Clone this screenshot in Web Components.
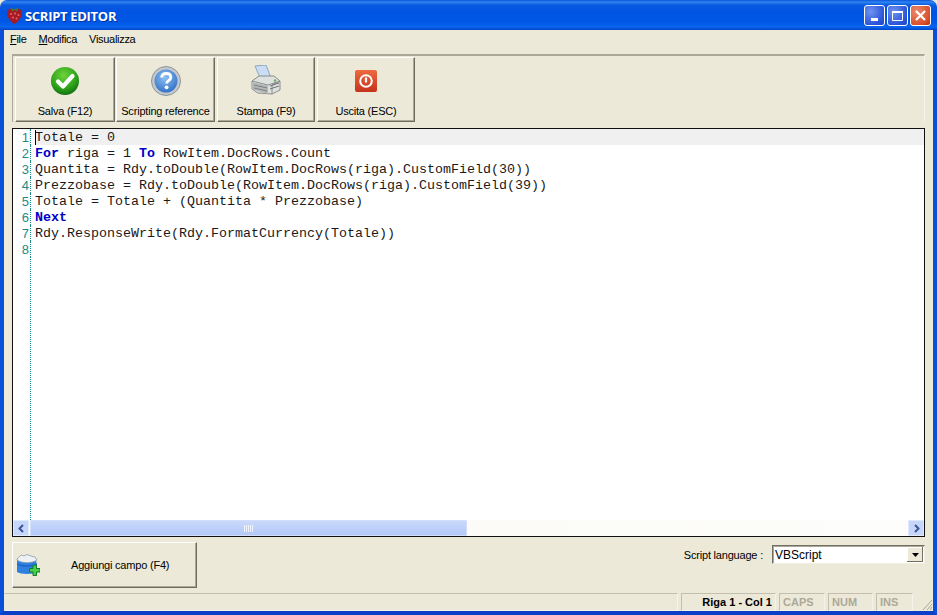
<!DOCTYPE html>
<html><head><meta charset="utf-8"><style>
html,body{margin:0;padding:0;width:937px;height:615px;overflow:hidden;background:#ece9d8}
</style></head><body>
<xp-window title="SCRIPT EDITOR">
  <xp-menubar><span><u>F</u>ile</span><span><u>M</u>odifica</span><span>Visualizza</span></xp-menubar>
  <xp-toolbar>
    <tool-button w="100" label="Salva (F12)" icon="save"></tool-button>
    <tool-button w="99" label="Scripting reference" icon="help"></tool-button>
    <tool-button w="98" label="Stampa (F9)" icon="print"></tool-button>
    <tool-button w="98" label="Uscita (ESC)" icon="exit"></tool-button>
  </xp-toolbar>
  <code-editor></code-editor>
  <bottom-panel></bottom-panel>
  <xp-statusbar></xp-statusbar>
</xp-window>
<script>
const UI='"Liberation Sans",Arial,sans-serif';
function def(name,html){customElements.define(name,class extends HTMLElement{constructor(){super();this.attachShadow({mode:'open'})}connectedCallback(){this.shadowRoot.innerHTML=typeof html==='function'?html(this):html;}})}
const ICONS={
save:`<svg width="30" height="30" viewBox="0 0 30 30"><defs><radialGradient id="g" cx="45%" cy="30%" r="75%"><stop offset="0" stop-color="#6fd23c"/><stop offset=".6" stop-color="#2fa51a"/><stop offset="1" stop-color="#0c6a10"/></radialGradient></defs><circle cx="15" cy="15" r="14" fill="url(#g)"/><path d="M8 15.500l5 5L22.500 10" fill="none" stroke="#fff" stroke-width="4.200" stroke-linecap="round" stroke-linejoin="round"/></svg>`,
help:`<svg width="32" height="32" viewBox="0 0 32 32"><defs><radialGradient id="h" cx="45%" cy="35%" r="70%"><stop offset="0" stop-color="#8fc0f2"/><stop offset="1" stop-color="#2e6fc4"/></radialGradient></defs><circle cx="16" cy="16" r="14.500" fill="#c4c8cc" stroke="#8f959b"/><circle cx="16" cy="16" r="11.500" fill="url(#h)"/><path d="M11.500 12.500c.5-3 2.500-4 4.700-4 2.700 0 4.600 1.500 4.600 3.800 0 3.300-4.200 3.300-4.200 6.200" fill="none" stroke="#fff" stroke-width="2.800"/><circle cx="16.600" cy="22.300" r="1.900" fill="#fff"/></svg>`,
print:`<svg width="32" height="32" viewBox="0 0 32 32"><path d="M5 1l11-1 5 13-10 2z" fill="#c9def5" stroke="#8ea6bc"/><path d="M2 16l7-5h15l6 5v9l-8 4-14-1-6-4z" fill="#dfe1df" stroke="#888c8c"/><path d="M2 16l16 4 12-4-8 4v9" fill="none" stroke="#8a8e8e"/><path d="M2 17l16 3.500V29L2 24z" fill="#b4b7b7"/><path d="M20 21l9-3M20 24l9-3" stroke="#6d7272"/><path d="M4 20l13 3M4 23l13 3" stroke="#7c8080"/><circle cx="25" cy="15.500" r="1.200" fill="#62b05a"/></svg>`,
exit:`<svg width="22" height="22" viewBox="0 0 22 22"><defs><linearGradient id="e" x1="0" y1="0" x2="0" y2="1"><stop offset="0" stop-color="#ee6a3f"/><stop offset="1" stop-color="#c4321c"/></linearGradient></defs><rect width="22" height="22" rx="2" fill="url(#e)"/><circle cx="11" cy="11" r="5.800" fill="none" stroke="#fff" stroke-width="2"/><path d="M11 7.500v5" stroke="#fff" stroke-width="2.200"/></svg>`};
def('xp-window',h=>`<style>
:host{display:flex;flex-direction:column;width:937px;height:615px;box-sizing:border-box;font:11px ${UI};color:#000;background:#ece9d8}
.title{height:30px;flex:none;display:flex;align-items:center;gap:3px;padding:0 6px 0 7px;box-sizing:border-box;background:linear-gradient(#0a53d8 0,#2f86f2 2px,#0a5ae0 5px,#0054e3 12px,#0057e6 22px,#0a66ee 27px,#0043c4 30px);border-radius:7px 7px 0 0;color:#fff}
.t{font:bold 13px "Open Sans","Liberation Sans",sans-serif;letter-spacing:-.3px;text-shadow:1px 1px #0a2f9e;flex:1;padding-top:1px}
.b{display:flex;gap:2px;margin-top:1px}
.btn{width:21px;height:21px;border:1px solid #fff;border-radius:3px;box-sizing:border-box;background:radial-gradient(circle at 30% 30%,#6f92f0,#2a55d8 70%,#2345c0);display:flex;align-items:center;justify-content:center}
.btn.x{background:radial-gradient(circle at 30% 30%,#ea8a6e,#d9502c 70%,#b8320f)}
.body{flex:1;min-height:0;display:flex;flex-direction:column;background:#ece9d8;border-left:4px solid #0a4fd8;border-right:4px solid #0a4fd8;border-bottom:4px solid #0a3fc8}
</style><div class="title"><svg width="15" height="18" viewBox="0 0 15 18"><path d="M7.500 3.500C11 2 15 3 15 7.500c0 4-4 8.500-7.500 10.500C4 16 0 11.500 0 7.500 0 3 4 2 7.500 3.500z" fill="#a81a24"/><path d="M3.500 1.500l4 2 4-2-1.500 4-2.500-1.500L5 5.500z" fill="#3f7d38"/><g fill="#e8696f"><circle cx="4" cy="8" r="1"/><circle cx="8" cy="7.500" r="1"/><circle cx="11.500" cy="9" r="1"/><circle cx="6" cy="11.500" r="1"/><circle cx="9.500" cy="12.500" r="1"/></g></svg><span class="t">${h.getAttribute('title')}</span>
<div class="b"><div class="btn"><svg width="13" height="13"><rect x="3" y="9" width="7" height="3" fill="#fff"/></svg></div><div class="btn"><svg width="13" height="13"><path d="M1.500 2.500h10v9h-10z" fill="none" stroke="#fff"/><rect x="1" y="2" width="11" height="2" fill="#fff"/></svg></div><div class="btn x"><svg width="13" height="13"><path d="M2 2l9 9M11 2l-9 9" stroke="#fff" stroke-width="2.200"/></svg></div></div></div>
<div class="body"><slot></slot></div>`);
def('xp-menubar',`<style>:host{display:flex;height:20px;flex:none;align-items:center;gap:12px;padding:0 6px 2px;box-sizing:border-box}
::slotted(span){font:11px ${UI};letter-spacing:-.3px}</style><slot></slot>`);
def('xp-toolbar',`<style>:host{display:flex;flex:none;gap:1px;margin:4px 8px 0 8px;height:68px;padding:1px 0 0 2px;box-sizing:border-box;border-top:2px solid #aca899;border-left:1px solid #aca899;border-right:1px solid #f5f3ea}</style><slot></slot>`);
def('tool-button',h=>`<style>:host{display:block;width:${h.getAttribute('w')}px;height:65px;margin-right:${h.getAttribute('w')=='100'?0:1}px}
.w{box-sizing:border-box;height:100%;display:flex;flex-direction:column;align-items:center;border:1px solid;border-color:#fff #6f6c5e #6f6c5e #fff;box-shadow:inset -1px -1px #aca899;font:11px ${UI};letter-spacing:-.2px}
.i{height:47px;display:flex;align-items:center;justify-content:center;flex:none;padding-bottom:1px;box-sizing:border-box}
.l{white-space:nowrap}</style><div class="w"><div class="i">${ICONS[h.getAttribute('icon')]}</div><div class="l">${h.getAttribute('label')}</div></div>`);
const esc=s=>s.replace(/\b(For|To|Next)\b/g,'<b>$1</b>');
const lines=['Totale = 0','For riga = 1 To RowItem.DocRows.Count','Quantita = Rdy.toDouble(RowItem.DocRows(riga).CustomField(30))','Prezzobase = Rdy.toDouble(RowItem.DocRows(riga).CustomField(39))','Totale = Totale + (Quantita * Prezzobase)','Next','Rdy.ResponseWrite(Rdy.FormatCurrency(Totale))',''];
def('code-editor',`<style>:host{display:flex;flex-direction:column;flex:none;height:409px;margin:6px 8px 0 8px;border:1px solid #111;background:#fff;box-sizing:border-box}
.c{flex:1;min-height:0;display:flex;flex-direction:column;position:relative;font:13.33px/18px "Liberation Mono",monospace;color:#1a1a1a}
.r{display:flex;height:16px}.r.a{background:#f0f0f0}
.n{width:16px;text-align:right;color:#1d8a8a;font:13px/18px "Liberation Sans",sans-serif;flex:none;background:#fff;height:16px}
.s{flex:none;background:#fff;border-left:1px dotted #1d8a8a;box-sizing:border-box;margin-left:1px;width:5px}
.t{white-space:pre;flex:1}
b{color:#0000c8;font-weight:bold}
.fill{flex:1;display:flex}.caret{position:absolute;left:22px;top:1px;width:1px;height:15px;background:#000}
.sb{height:16px;flex:none;display:flex;background:linear-gradient(90deg,#fbfaf6,#fdfdfb);gap:1px}
.ar{width:16px;height:16px;flex:none;background:#c6d6fb;border-radius:2px;display:flex;align-items:center;justify-content:center;box-shadow:inset 0 0 0 1px #dfe8fd}
.th{width:437px;height:16px;background:linear-gradient(#ccdafb,#bccffa 60%,#b2c7f7);border-radius:2px;box-shadow:inset 0 0 0 1px #d0ddfb;display:flex;align-items:center;justify-content:center}
.tr{flex:1}</style>
<div class="c">${lines.map((l,i)=>`<div class="r${i==0?' a':''}"><div class="n">${i+1}</div><div class="s"></div><div class="t">${esc(l)}</div></div>`).join('')}<div class="fill"><div style="width:18px;border-right:1px dotted #1d8a8a;box-sizing:border-box"></div></div><div class="caret"></div></div>
<div class="sb"><div class="ar"><svg width="9" height="9"><path d="M6 1L2.500 4.500 6 8" fill="none" stroke="#3a5599" stroke-width="2"/></svg></div><div class="th"><svg width="9" height="7"><path d="M.5 0v7M2.500 0v7M4.500 0v7M6.500 0v7M8.500 0v7" stroke="#eef3fe"/></svg></div><div class="tr"></div><div class="ar"><svg width="9" height="9"><path d="M3 1l3.500 3.500L3 8" fill="none" stroke="#3a5599" stroke-width="2"/></svg></div></div>`);
def('bottom-panel',`<style>:host{display:flex;flex:none;height:55px;padding:5px 8px 0 8px;box-sizing:border-box;justify-content:space-between;font:11px ${UI};letter-spacing:-.2px}
.btn{width:185px;height:46px;box-sizing:border-box;border:1px solid;border-color:#fff #6f6c5e #6f6c5e #fff;box-shadow:inset -1px -1px #aca899;display:flex;align-items:center;padding-left:3px}
.btn span{margin-left:31px}.rt{display:flex;align-items:center;height:19px;margin-top:3px;gap:9px}
.sel{width:153px;height:19px;box-sizing:border-box;border:1px solid;border-color:#716f64 #f1efe2 #f1efe2 #716f64;background:#fff;display:flex;align-items:center;padding-left:2px;position:relative;box-shadow:inset 1px 1px #aca899;font-size:12px;letter-spacing:0}
.dd{position:absolute;right:1px;top:1px;width:16px;height:15px;background:#ece9d8;box-shadow:inset -1px -1px #716f64,inset 1px 1px #fff;display:flex;align-items:center;justify-content:center}</style>
<div class="btn"><svg width="24" height="24" viewBox="0 0 24 24"><path d="M1 6c3-3 16-3 19 0l1 13c-3 2.500-17 2.500-20 0z" fill="#2f80e0"/><path d="M1 10c4 3 16 3 20 0v1.500c-4 3-16 3-20 0z" fill="#1c64c4"/><path d="M1 6l4-4 3 1 3-1.500 4 1.500 4 1 2 3c-5 3.500-15 3.500-20 0z" fill="#eef1f4" stroke="#8093a8" stroke-width=".7"/><path d="M13.500 15.500h3.500V12h3.500v3.500H24v3.500h-3.500v3.500H17V19h-3.500z" fill="#45d045" stroke="#137a28"/></svg><span>Aggiungi campo (F4)</span></div>
<div class="rt"><span>Script language :</span><div class="sel">VBScript<div class="dd"><svg width="7" height="4"><path d="M0 0h7L3.500 4z"/></svg></div></div></div>`);
def('xp-statusbar',`<style>:host{display:flex;flex:none;height:19px;box-sizing:border-box;padding:1px 0 0 0;gap:3px;font:bold 11px ${UI}}
.p{border:1px solid;border-color:#c2bfae #f5f3ea #f5f3ea #c2bfae;display:flex;align-items:center;height:18px;box-sizing:border-box}
.d{color:#aca899;padding-left:3px}
.fx{flex:1;border-left-color:transparent}
.g{width:20px;margin-left:-3px;display:flex;justify-content:flex-end}</style><div class="p fx"></div><div class="p" style="width:95px;justify-content:flex-end;padding-right:3px">Riga 1 - Col 1</div><div class="p d" style="width:46px">CAPS</div><div class="p d" style="width:45px">NUM</div><div class="p d" style="width:37px">INS</div><div class="g"><svg width="14" height="18"><path d="M13 7l-9 10M13 11l-5 6M13 14l-2 3" stroke="#aca899"/></svg></div>`);
</script>
</body></html>
